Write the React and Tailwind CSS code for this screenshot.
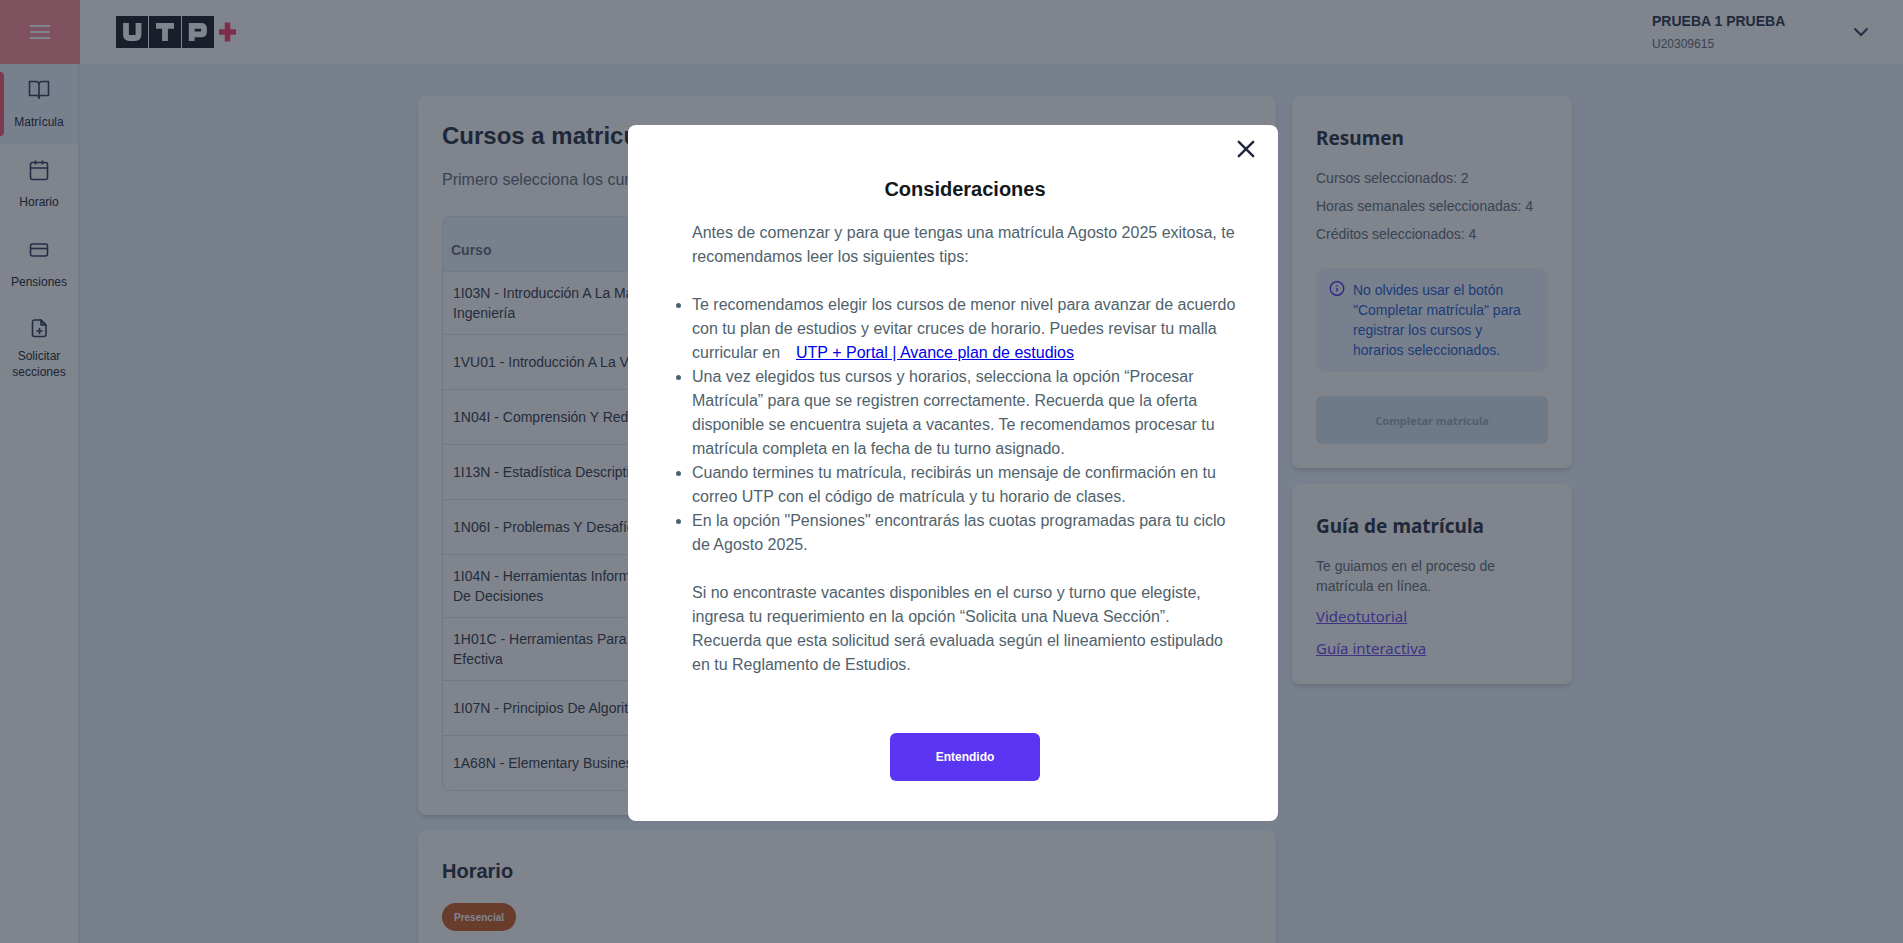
import React from "react";

const navItems = [
  { label: "Matrícula", icon: "book", active: true },
  { label: "Horario", icon: "calendar" },
  { label: "Pensiones", icon: "card" },
  { label: "Solicitar secciones", icon: "file" },
];

const courses = [
  "1I03N - Introducción A La Matemática Para Ingeniería",
  "1VU01 - Introducción A La Vida Universitaria",
  "1N04I - Comprensión Y Redacción De Textos I",
  "1I13N - Estadística Descriptiva Y Probabilidades",
  "1N06I - Problemas Y Desafíos En El Perú Actual",
  "1I04N - Herramientas Informáticas Para La Toma De Decisiones",
  "1H01C - Herramientas Para La Comunicación Efectiva",
  "1I07N - Principios De Algoritmos",
  "1A68N - Elementary Business English",
];

function Icon({ name }) {
  const shapes = {
    book: <path d="M12 7C12 5 10.800 3.500 9 3.500H2.500v14H10c1.300 0 2 .8 2 2.500 0-1.700.7-2.500 2-2.500h7.500v-14H15C13.200 3.500 12 5 12 7zM12 7v14" />,
    calendar: (
      <>
        <rect x="3.500" y="4.500" width="17" height="17" rx="2" />
        <path d="M3.500 10h17M8.500 2.500v4M15.500 2.500v4" />
      </>
    ),
    card: (
      <>
        <rect x="3.500" y="6" width="17" height="12" rx="2" />
        <path d="M3.500 10.500h17" />
      </>
    ),
    file: (
      <>
        <path d="M14 4H7.500a2 2 0 0 0-2 2v12.500a2 2 0 0 0 2 2h9.500a2 2 0 0 0 2-2V9zM12.500 12v6M9.500 15h6" />
        <path d="M14 4v5h5z" fill="currentColor" fillOpacity=".5" />
      </>
    ),
  };
  return (
    <svg viewBox="0 0 24 24" className="size-6 text-[#48536f]" fill="none" stroke="currentColor" strokeWidth="1.6" strokeLinejoin="round" aria-hidden="true">
      {shapes[name]}
    </svg>
  );
}

function Logo() {
  return (
    <svg viewBox="0 0 122 32" className="h-8 w-[122px]" role="img" aria-label="UTP+">
      <path fill="#333238" d="M0 0h32v32H0zM33 0h32v32H33zM66 0h32v32H66z" />
      <g fill="none" stroke="#fff" strokeWidth="5.800">
        <path d="M10 7v11.500q0 3.500 3.500 3.500h5.500q3.500 0 3.500-3.500V7" />
        <path d="M40 9.900h18M49 9.900V25" />
        <path d="M75.700 25V9.900h9.300q3 0 3 3v2.500q0 3-3 3H75.700" />
      </g>
      <path stroke="#ff5078" strokeWidth="5.500" d="M103 16h17M111.500 6.500v19" />
    </svg>
  );
}

function Header() {
  return (
    <header className="flex h-16 items-center bg-white">
      <button aria-label="Menú" className="flex h-16 w-20 items-center justify-center bg-[#ff9ba5]">
        <svg viewBox="0 0 20 16" className="h-4 w-5" stroke="#fff" strokeWidth="2" aria-hidden="true">
          <path d="M0 2h20M0 8h20M0 14h20" />
        </svg>
      </button>
      <a href="#inicio" className="ml-9">
        <Logo />
      </a>
      <div className="ml-auto flex w-[251px] items-center justify-between pr-8">
        <div>
          <p className="text-sm leading-5 font-bold text-[#414a5a]">PRUEBA 1 PRUEBA</p>
          <p className="mt-1 text-xs leading-[18px] text-[#737d88]">U20309615</p>
        </div>
        <button aria-label="Abrir menú de usuario">
          <svg viewBox="0 0 20 20" className="size-5" fill="none" stroke="#48536f" strokeWidth="2" strokeLinecap="round" aria-hidden="true">
            <path d="M4 7l6 6 6-6" />
          </svg>
        </button>
      </div>
    </header>
  );
}

function Sidebar() {
  return (
    <nav className="w-20 shrink-0 border-r-2 border-[#e0edf8] bg-white">
      {navItems.map((item) => (
        <a
          key={item.label}
          href={"#" + item.icon}
          className={
            "relative flex h-20 flex-col items-center text-center text-xs leading-4 text-[#383d48] " +
            (item.icon === "file" ? "gap-2 px-2 pt-3 " : "gap-3 pt-[14px] ") +
            (item.active ? "bg-[#f2f6ff]" : "bg-white")
          }
        >
          {item.active && <span className="absolute top-2 left-0 h-16 w-1 rounded-r bg-[#ff6b83]" />}
          <Icon name={item.icon} />
          {item.label}
        </a>
      ))}
    </nav>
  );
}

function Card({ className, children }) {
  return <section className={"rounded-lg bg-white px-6 shadow-md " + className}>{children}</section>;
}

function Courses() {
  return (
    <Card className="py-6">
      <h1 className="text-2xl leading-8 font-bold text-[#3e4654]">Cursos a matricular</h1>
      <p className="mt-4 text-base leading-6 text-[#737d88]">Primero selecciona los cursos que deseas llevar</p>
      <div className="mt-6 overflow-hidden rounded-lg border border-[#dceaf5]">
        <table className="w-full border-collapse text-left text-sm leading-5">
          <thead>
            <tr className="h-[54px] bg-[#f2f6ff]">
              <th className="px-2 pt-3 font-bold text-[#737d88]">Curso</th>
            </tr>
          </thead>
          <tbody>
            {courses.map((course) => (
              <tr key={course} className="h-[55px] border-t border-[#dceaf5]">
                <td className="px-[10px] py-[11px] text-[#4b505b]">
                  <p className="max-w-[312px]">{course}</p>
                </td>
              </tr>
            ))}
          </tbody>
        </table>
      </div>
    </Card>
  );
}

function Schedule() {
  return (
    <Card className="pt-[26px] pb-6">
      <h2 className="text-xl leading-7 font-bold text-[#3e4654]">Horario</h2>
      <span className="mt-[18px] mb-60 inline-flex h-7 items-center rounded-full bg-[#d0703c] px-3 text-[10px] font-bold text-white">
        Presencial
      </span>
    </Card>
  );
}

function Summary() {
  return (
    <Card className="pt-7 pb-6">
      <h2 className="font-['Noto_Sans',sans-serif] text-[19px] leading-7 font-bold text-[#3e4654]">Resumen</h2>
      <div className="mt-4 flex flex-col gap-2 text-sm leading-5 text-[#737d88]">
        <p>Cursos seleccionados: 2</p>
        <p>Horas semanales seleccionadas: 4</p>
        <p>Créditos seleccionados: 4</p>
      </div>
      <div className="mt-6 flex gap-2 rounded-lg bg-[#f2f6ff] py-3 pr-5 pl-[13px] text-sm leading-5 text-[#3a6fd0]">
        <svg viewBox="0 0 16 16" className="size-4 shrink-0" fill="none" stroke="#5a36f2" aria-hidden="true">
          <circle cx="8" cy="8.500" r="6.800" strokeWidth="1.300" />
          <path d="M8 8v3.500M8 5.200v1.300" strokeWidth="1.300" />
        </svg>
        <p>No olvides usar el botón "Completar matrícula" para registrar los cursos y horarios seleccionados.</p>
      </div>
      <button disabled className="mt-6 h-12 w-full rounded-md bg-[#dceaf5] pt-[2px] font-['Noto_Sans',sans-serif] text-[11px] font-bold text-[#a5b0c8]">
        Completar matrícula
      </button>
    </Card>
  );
}

function Guide() {
  return (
    <Card className="pt-7 pb-6">
      <h2 className="font-['Noto_Sans',sans-serif] text-[19px] leading-7 font-bold text-[#3e4654]">Guía de matrícula</h2>
      <p className="mt-4 text-sm leading-5 text-[#737d88]">Te guiamos en el proceso de matrícula en línea.</p>
      <div className="mt-2 flex flex-col items-start gap-2 font-['Noto_Sans',sans-serif] text-[15px] leading-6 text-[#7a5cf0]">
        <a href="#videotutorial" className="underline">Videotutorial</a>
        <a href="#guia" className="underline">Guía interactiva</a>
      </div>
    </Card>
  );
}

function Modal() {
  return (
    <div className="fixed inset-0 flex items-center justify-center bg-[#00091b]/50 pt-[3px] pl-[3px]">
      <div role="dialog" aria-modal="true" aria-labelledby="dialog-title" className="relative w-[650px] rounded-lg bg-white pt-[50px] pr-10 pb-10 pl-16">
        <button aria-label="Cerrar" className="absolute top-3 right-5">
          <svg viewBox="0 0 24 24" className="size-6" stroke="#20263c" strokeWidth="2.400" strokeLinecap="round" aria-hidden="true">
            <path d="M4.800 4.800l14.400 14.400M19.200 4.800l-14.400 14.400" />
          </svg>
        </button>
        <h2 id="dialog-title" className="text-center text-xl leading-7 font-bold text-[#12181b]">Consideraciones</h2>
        <div className="mt-[18px] text-base leading-6 text-[#4f626c]">
          <p>Antes de comenzar y para que tengas una matrícula Agosto 2025 exitosa, te recomendamos leer los siguientes tips:</p>
          <ul className="my-6 list-disc">
            <li>
              Te recomendamos elegir los cursos de menor nivel para avanzar de acuerdo con tu plan de estudios y evitar cruces de horario. Puedes revisar tu malla curricular en
              <a href="#avance" className="ml-4 text-[#0000ee] underline">UTP + Portal | Avance plan de estudios</a>
            </li>
            <li>Una vez elegidos tus cursos y horarios, selecciona la opción “Procesar Matrícula” para que se registren correctamente. Recuerda que la oferta disponible se encuentra sujeta a vacantes. Te recomendamos procesar tu matrícula completa en la fecha de tu turno asignado.</li>
            <li>Cuando termines tu matrícula, recibirás un mensaje de confirmación en tu correo UTP con el código de matrícula y tu horario de clases.</li>
            <li>En la opción "Pensiones" encontrarás las cuotas programadas para tu ciclo de Agosto 2025.</li>
          </ul>
          <p>Si no encontraste vacantes disponibles en el curso y turno que elegiste, ingresa tu requerimiento en la opción “Solicita una Nueva Sección”. Recuerda que esta solicitud será evaluada según el lineamiento estipulado en tu Reglamento de Estudios.</p>
        </div>
        <div className="mt-14 flex justify-center">
          <button className="h-12 w-[150px] rounded-md bg-[#5a36f2] text-xs font-bold text-white">Entendido</button>
        </div>
      </div>
    </div>
  );
}

export default function App() {
  return (
    <div className="flex h-screen flex-col overflow-hidden bg-[#f2f6ff] font-['Liberation_Sans',Arial,sans-serif]">
      <Header />
      <div className="flex min-h-0 flex-1">
        <Sidebar />
        <main className="min-w-0 flex-1 overflow-hidden pt-8 pl-[7px]">
          <div className="mx-auto flex max-w-[1154px] items-start gap-4">
            <div className="flex min-w-0 flex-1 flex-col gap-4">
              <Courses />
              <Schedule />
            </div>
            <aside className="flex w-[280px] shrink-0 flex-col gap-4">
              <Summary />
              <Guide />
            </aside>
          </div>
        </main>
      </div>
      <Modal />
    </div>
  );
}
